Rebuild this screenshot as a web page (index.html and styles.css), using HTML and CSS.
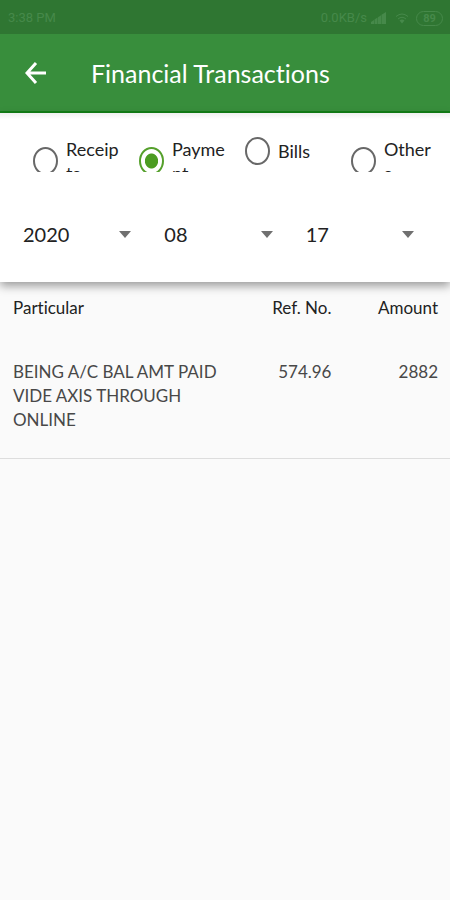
FILE: index.html
```html
<!DOCTYPE html>
<html lang="en">
<head>
<meta charset="utf-8">
<meta name="viewport" content="width=device-width, initial-scale=1">
<title>Financial Transactions</title>
<link rel="stylesheet" href="styles.css">
</head>
<body>
<div class="status">
  <span>3:38 PM</span>
  <div class="status-icons">
    <span>0.0KB/s</span>
    <svg class="signal" width="15" height="12" viewBox="0 0 15 12" aria-hidden="true"><path d="M0 12v-2l3-2v4zM3.500 12V7.600l3-2V12zM7 12V5.200l3-2V12zM10.500 12V2.800L15 0v12z"/></svg>
    <svg width="14" height="12" viewBox="0 0 14 12" aria-hidden="true"><path class="arc" d="M1 4.500q6-5 12 0M3 7q4-3.400 8 0"/><path d="M4.500 8.500q2.500-2 5 0L7 11.500z"/></svg>
    <span class="battery">89</span>
  </div>
</div>
<header class="bar">
  <button class="back" type="button" aria-label="Back">
    <svg width="22" height="24" viewBox="0 0 22 24" aria-hidden="true"><path d="M21 12H2M11 2L2 12l9 10"/></svg>
  </button>
  <h1>Financial Transactions</h1>
</header>
<main>
  <form class="filters">
    <div class="types" role="radiogroup" aria-label="Transaction type">
      <label class="type"><input type="radio" name="type"><span>Receip<wbr>ts</span></label>
      <label class="type"><input type="radio" name="type" checked><span>Payme<wbr>nt</span></label>
      <label class="type"><input type="radio" name="type"><span>Bills</span></label>
      <label class="type"><input type="radio" name="type"><span>Other<wbr>s</span></label>
    </div>
    <div class="dates">
      <div class="pick"><select aria-label="Year"><option>2020</option></select></div>
      <div class="pick"><select aria-label="Month"><option>08</option></select></div>
      <div class="pick"><select aria-label="Day"><option>17</option></select></div>
    </div>
  </form>
  <table class="list">
    <thead>
      <tr><th scope="col">Particular</th><th scope="col" class="num">Ref. No.</th><th scope="col" class="num">Amount</th></tr>
    </thead>
    <tbody>
      <tr><td>BEING A/C BAL AMT PAID VIDE AXIS THROUGH ONLINE</td><td class="num">574.96</td><td class="num">2882</td></tr>
    </tbody>
  </table>
</main>
</body>
</html>
```
FILE: styles.css
```css
* { box-sizing: border-box; }

body {
  margin: 0;
  min-height: 100vh;
  background: #fafafa;
  color: #222;
  font-family: Lato, sans-serif;
  font-size: 18px;
  line-height: 24px;
  font-variant-ligatures: none;
}

.status {
  display: flex;
  align-items: center;
  justify-content: space-between;
  height: 34px;
  padding: 2px 7px 0 8px;
  background: #2f7632;
  color: #46894a;
  font: 13px/16px Roboto, sans-serif;
}

.status-icons {
  display: flex;
  align-items: center;
  gap: 4px;
}

.status-icons svg { fill: currentColor; }
.status-icons .signal { margin-right: 5px; }
.status-icons .arc { fill: none; stroke: currentColor; }

.battery {
  width: 27px;
  margin-left: 3px;
  border: 1px solid currentColor;
  border-radius: 8px;
  font-size: 11px;
  font-weight: 700;
  line-height: 13px;
  text-align: center;
}

.bar {
  display: flex;
  align-items: center;
  height: 79px;
  padding-left: 25px;
  border-bottom: 2px solid #148018;
  background: #388e3c;
  color: #fff;
}

.back {
  display: flex;
  width: 66px;
  padding: 0;
  border: 0;
  background: none;
  color: inherit;
}

.back path {
  fill: none;
  stroke: currentColor;
  stroke-width: 3;
}

h1 {
  margin: 0;
  font-size: 25px;
  font-weight: 400;
  line-height: 32px;
}

.filters {
  padding: 24px 13px 30px;
  background: linear-gradient(#f0f0f0, #fff 6px);
  box-shadow: 0 4px 9px rgba(0, 0, 0, .38);
}

.types {
  display: grid;
  grid-template-columns: repeat(4, 1fr);
  height: 35px;
  overflow: hidden;
}

.type {
  display: flex;
  align-items: center;
  align-self: start;
  gap: 8px;
  padding-left: 20px;
}

.type span {
  flex: 1;
  min-width: 0;
}

.type input {
  appearance: none;
  flex: none;
  width: 25px;
  height: 28px;
  margin: 0;
  border: 2px solid #686868;
  border-radius: 50%;
}

.type input:checked {
  border-color: #55a02c;
  background: radial-gradient(ellipse 7px 8px, #4c9c22 88%, transparent);
}

.dates {
  display: grid;
  grid-template-columns: repeat(3, 1fr);
  margin-top: 44px;
}

.pick {
  display: flex;
  align-items: center;
  padding: 0 23px 0 10px;
}

.pick::after {
  content: "";
  border: 6px solid transparent;
  border-top: 7px solid #707070;
  border-bottom: 0;
}

.pick select {
  appearance: none;
  flex: 1;
  min-width: 0;
  height: 36px;
  padding: 0;
  border: 0;
  background: none;
  color: inherit;
  font: 20px/36px Lato, sans-serif;
}

.list {
  width: 100%;
  border-collapse: collapse;
  table-layout: fixed;
  font-size: 17px;
}

.list th,
.list td {
  padding: 14px 12px 26px 0;
  font-weight: 400;
  text-align: left;
  vertical-align: top;
}

.list th:first-child {
  width: 50%;
  padding-left: 13px;
}

.list td:first-child {
  padding: 14px 0 26px 13px;
}

.list th:nth-child(2) { width: 25%; }

.list td {
  color: #484848;
  border-bottom: 1px solid #ddd;
}

.list th.num:nth-child(2),
.list td.num:nth-child(2) { padding-right: 6px; }

.list .num { text-align: right; }
```
